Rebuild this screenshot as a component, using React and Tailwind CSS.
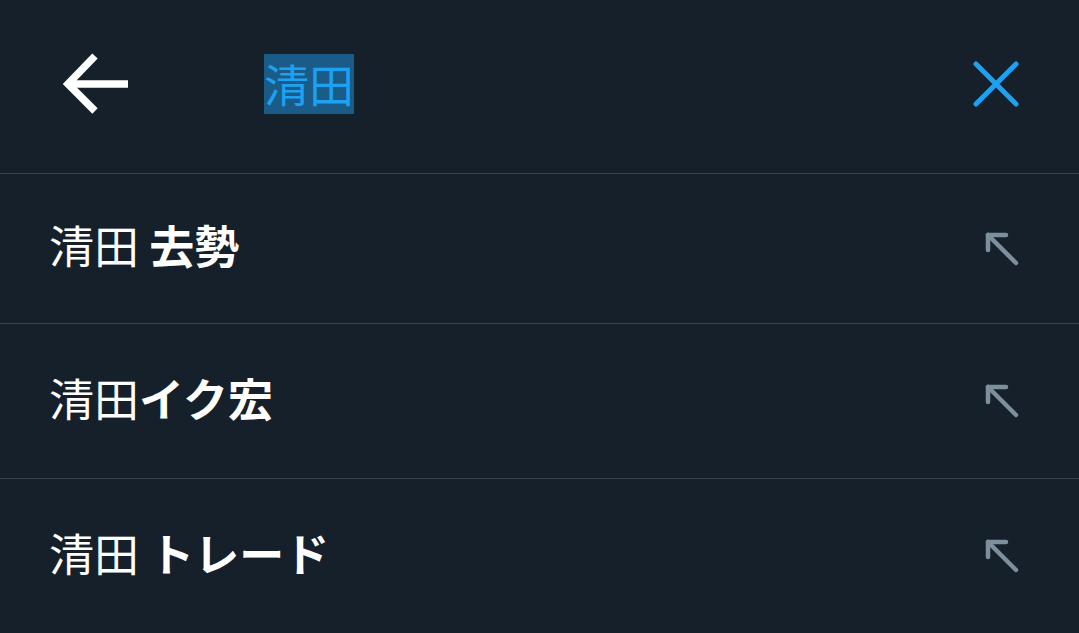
export default function App() {
  const rows = [
    { pre: '清田', rest: ' 去勢', h: 'h-[150px]' },
    { pre: '清田', rest: 'イク宏', h: 'h-[155px]' },
    { pre: '清田', rest: ' トレード', h: 'h-[155px]' },
  ]
  return (
    <div className="w-[1079px] h-[633px] bg-[#15202b] overflow-hidden" style={{ fontFamily: '"Noto Sans CJK JP", "Noto Sans", sans-serif' }}>
      <div className="h-[174px] flex items-center border-b border-[#38444d]">
        <div className="w-[264px] flex items-center pl-[62px] pb-[6px]">
          <svg width="68" height="66" viewBox="0 0 68 66" fill="none" stroke="#fff" strokeWidth="7.5">
            <path d="M66 33H8" />
            <path d="M33 5L6 33l27 27" />
          </svg>
        </div>
        <div className="flex-1 flex items-center pb-[6px]">
          <span className="bg-[#1b5b87] text-[#1da1f2] text-[45px] leading-[60px] h-[60px]">清田</span>
        </div>
        <div className="pr-[59px] pb-[6px]">
          <svg width="48" height="48" viewBox="0 0 48 48" fill="none" stroke="#1da1f2" strokeWidth="5" strokeLinecap="round">
            <path d="M4 4l40 40M44 4L4 44" />
          </svg>
        </div>
      </div>
      {rows.map((r, i) => (
        <div key={i} className={`${r.h} flex items-center justify-between border-b border-[#38444d] pl-[49px] pr-[60px]`}>
          <div className="text-white text-[45px] leading-none whitespace-pre pb-[8px]">
            {r.pre}<span className="font-bold">{r.rest}</span>
          </div>
          <svg width="34" height="34" viewBox="0 0 34 34" fill="none" stroke="#7d8e9c" strokeWidth="4.5" strokeLinecap="round" strokeLinejoin="round">
            <path d="M3 3l28 28" />
            <path d="M3 18V3h18" />
          </svg>
        </div>
      ))}
    </div>
  )
}
